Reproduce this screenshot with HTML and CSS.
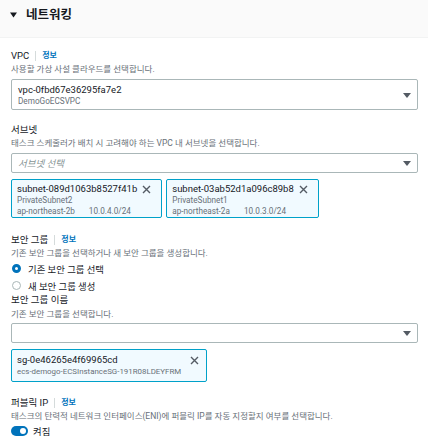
FILE: index.html
```html
<!DOCTYPE html>
<html lang="ko">
<head>
<meta charset="utf-8">
<link rel="stylesheet" href="styles.css">
</head>
<body>
<div class="panel">
  <div class="header">
    <svg class="caret-down" width="7" height="6" viewBox="0 0 7 6"><path d="M0 0.5h7L3.5 5.5z" fill="#16191f"/></svg>
    <span class="title">네트워킹</span>
  </div>
  <div class="content">
    <div class="field first">
      <div class="label">VPC<span class="sep"></span><a class="info">정보</a></div>
      <div class="desc">사용할 가상 사설 클라우드를 선택합니다.</div>
      <div class="select tall">
        <div class="value">
          <div class="main">vpc-0fbd67e36295fa7e2</div>
          <div class="sub">DemoGoECSVPC</div>
        </div>
        <svg class="caret" width="8" height="5" viewBox="0 0 8 5"><path d="M0 0h8L4 5z" fill="#545b64"/></svg>
      </div>
    </div>

    <div class="field subnet">
      <div class="label">서브넷</div>
      <div class="desc">태스크 스케줄러가 배치 시 고려해야 하는 VPC 내 서브넷을 선택합니다.</div>
      <div class="select">
        <span class="placeholder">서브넷 선택</span>
        <svg class="caret" width="8" height="5" viewBox="0 0 8 5"><path d="M0 0h8L4 5z" fill="#545b64"/></svg>
      </div>
      <div class="tokens">
        <div class="token">
          <div class="tok-text">
            <div class="main">subnet-089d1063b8527f41b</div>
            <div class="sub">PrivateSubnet2</div>
            <div class="sub">ap-northeast-2b<span class="cidr">10.0.4.0/24</span></div>
          </div>
          <svg class="x" width="9" height="9" viewBox="0 0 9 9"><path d="M1 1l7 7M8 1l-7 7" stroke="#545b64" stroke-width="1.4" fill="none"/></svg>
        </div>
        <div class="token">
          <div class="tok-text">
            <div class="main">subnet-03ab52d1a096c89b8</div>
            <div class="sub">PrivateSubnet1</div>
            <div class="sub">ap-northeast-2a<span class="cidr">10.0.3.0/24</span></div>
          </div>
          <svg class="x" width="9" height="9" viewBox="0 0 9 9"><path d="M1 1l7 7M8 1l-7 7" stroke="#545b64" stroke-width="1.4" fill="none"/></svg>
        </div>
      </div>
    </div>

    <div class="field sg">
      <div class="label">보안 그룹<span class="sep"></span><a class="info">정보</a></div>
      <div class="desc">기존 보안 그룹을 선택하거나 새 보안 그룹을 생성합니다.</div>
      <div class="radios">
        <label class="radio"><span class="dot on"></span>기존 보안 그룹 선택</label>
        <label class="radio"><span class="dot"></span>새 보안 그룹 생성</label>
      </div>
      <div class="label sub-label">보안 그룹 이름</div>
      <div class="desc sub-desc">기존 보안 그룹을 선택합니다.</div>
      <div class="select sg-select">
        <span class="placeholder"></span>
        <svg class="caret" width="8" height="5" viewBox="0 0 8 5"><path d="M0 0h8L4 5z" fill="#545b64"/></svg>
      </div>
      <div class="tokens">
        <div class="token sg-token">
          <div class="tok-text">
            <div class="main">sg-0e46265e4f69965cd</div>
            <div class="sub">ecs-demogo-ECSInstanceSG-191R08LDEYFRM</div>
          </div>
          <svg class="x" width="9" height="9" viewBox="0 0 9 9"><path d="M1 1l7 7M8 1l-7 7" stroke="#545b64" stroke-width="1.4" fill="none"/></svg>
        </div>
      </div>
    </div>

    <div class="field ip">
      <div class="label">퍼블릭 IP<span class="sep"></span><a class="info">정보</a></div>
      <div class="desc">태스크의 탄력적 네트워크 인터페이스(ENI)에 퍼블릭 IP를 자동 지정할지 여부를 선택합니다.</div>
      <div class="toggle-row">
        <span class="toggle"><span class="knob"></span></span>
        <span>켜짐</span>
      </div>
    </div>
  </div>
</div>
</body>
</html>
```

FILE: styles.css
```css
* { box-sizing: border-box; }
html, body { margin: 0; padding: 0; background: #ffffff; }
body {
  font-family: Roboto, "Noto Sans CJK KR", sans-serif;
  color: #16191f;
  font-size: 10px;
}
.panel { width: 428px; }
.header {
  height: 38px;
  background: #fafafa;
  border-bottom: 1px solid #f2f3f3;
  display: flex;
  padding: 7px 0 0 10px;
  gap: 9px;
  align-items: flex-start;
}
.caret-down { margin-top: 5px; }
.title { font-size: 12.5px; font-weight: 700; line-height: 16px; }
.content { padding: 0 10px 0 11px; }
.field { margin-top: 14px; }
.field.first { margin-top: 11px; }
.field.subnet { margin-top: 13px; }
.field.sg { margin-top: 15px; }
.field.ip { margin-top: 14px; }
.label {
  font-size: 9.5px;
  line-height: 14px;
  display: flex;
  align-items: center;
}
.sep {
  display: inline-block;
  width: 1px;
  height: 10px;
  background: #d5dbdb;
  margin: 0 6px;
}
.info { color: #0073bb; font-weight: 700; font-size: 8px; }
.desc {
  font-size: 8.5px;
  line-height: 13px;
  color: #687078;
}
.select {
  margin-top: 3px;
  border: 1px solid #aab7b8;
  border-radius: 2px;
  height: 20px;
  display: flex;
  align-items: center;
  justify-content: space-between;
  padding: 0 6px 0 6px;
}
.select.tall { height: 31px; padding: 2px 6px 1px 6px; }
.main { font-size: 9.5px; line-height: 13px; white-space: nowrap; }
.sub { font-size: 8.2px; line-height: 11px; color: #687078; white-space: nowrap; }
.caret { flex: none; }
.placeholder { font-style: italic; color: #879596; font-size: 9.5px; }
.tokens { display: flex; gap: 4px; margin-top: 6px; }
.token {
  background: #f1faff;
  border: 1px solid #00a1c9;
  border-radius: 2px;
  display: flex;
  align-items: flex-start;
  padding: 2px 10px 0 5px;
  gap: 5px;
}
.tok-text { display: flex; flex-direction: column; }
.cidr { margin-left: 14px; }
.x { margin-top: 3px; flex: none; }
.sg-token { width: 196px; justify-content: space-between; padding: 3px 7px 3px 5px; }
.sg-token .sub { line-height: 12px; font-size: 7.9px; }
.radios { margin-top: 0; }
.radio {
  display: flex;
  align-items: center;
  height: 17px;
  font-size: 9.4px;
}
.dot {
  width: 9px;
  height: 9px;
  border-radius: 50%;
  border: 1px solid #aab7b8;
  margin: 0 7px 0 1px;
}
.dot.on { border: 3px solid #0073bb; }
.sub-label { line-height: 12px; margin-top: 0; }
.sub-desc { margin-top: 2px; }
.sg-select { margin-top: 2px; }
.toggle-row { display: flex; align-items: center; gap: 5px; margin-top: 1px; font-size: 9.4px; }
.toggle {
  width: 17px;
  height: 10px;
  border-radius: 5px;
  background: #0073bb;
  display: flex;
  align-items: center;
  justify-content: flex-end;
  padding-right: 2px;
}
.knob { width: 6px; height: 6px; border-radius: 50%; background: #fff; }
```
